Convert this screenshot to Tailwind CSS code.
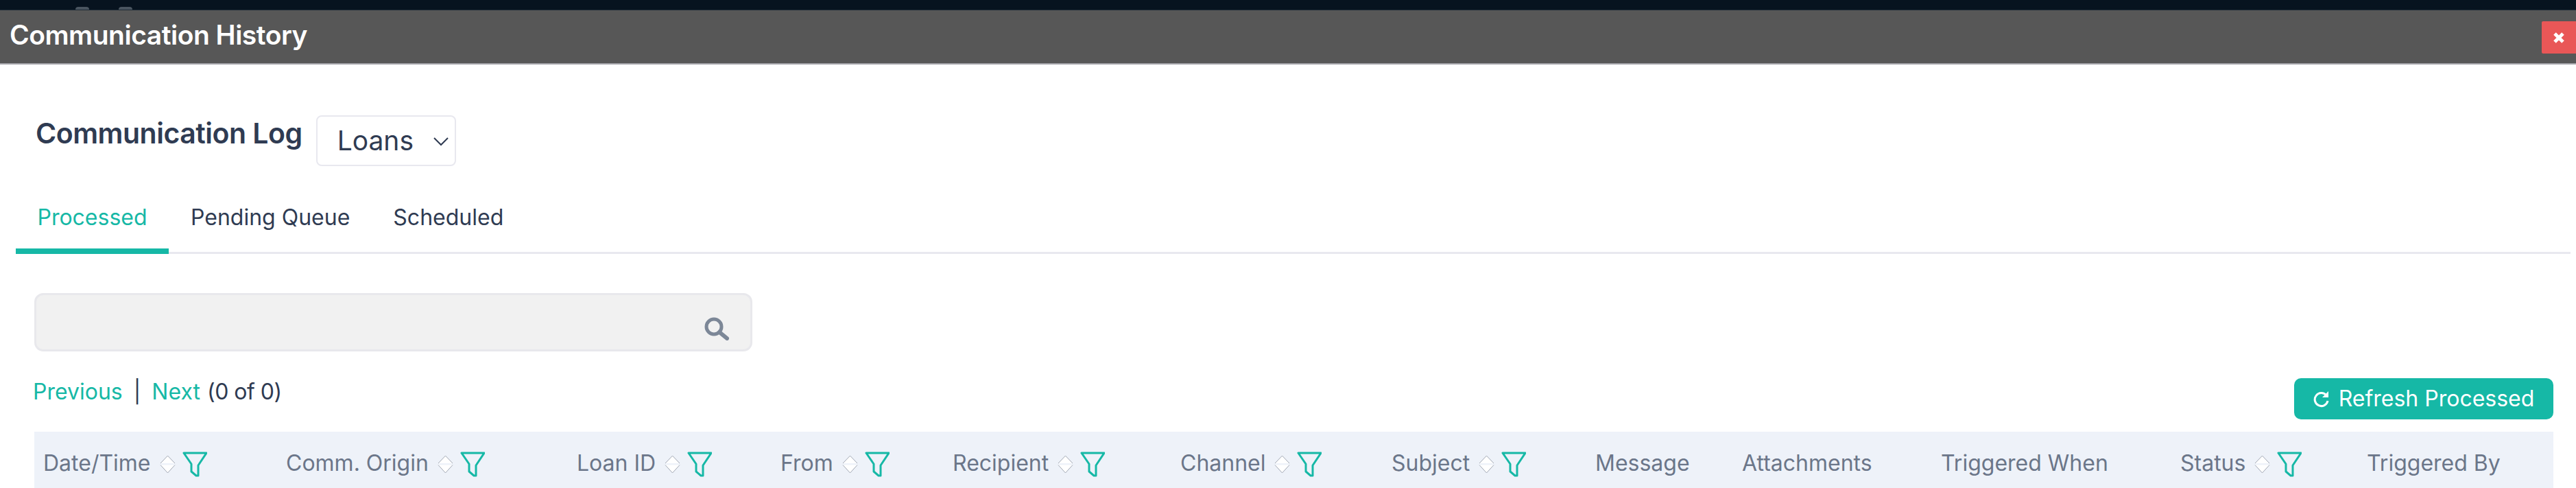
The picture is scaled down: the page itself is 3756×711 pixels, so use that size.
<!DOCTYPE html>
<html lang="en">
<head>
  <meta charset="UTF-8">
  <title>Communication History</title>
  <script src="https://cdn.jsdelivr.net/npm/@tailwindcss/browser@4"></script>
</head>
<body class="bg-white h-[711px] overflow-hidden font-[Inter,sans-serif] text-[#2f3b52]">
  <div class="h-[15px] bg-[#07131f] border-b border-[#1d2a36] flex items-end pl-[110px] gap-[43px]">
    <span class="w-[20px] h-[4px] rounded-t-full bg-[#4a5560]"></span>
    <span class="w-[20px] h-[4px] rounded-t-full bg-[#4a5560]"></span>
  </div>

  <!-- modal header -->
  <div class="h-[79px] bg-[#575757] border-b-2 border-[#a3a3a8] flex items-center justify-between pl-[14px]">
    <h1 class="text-[39px] leading-[44px] -mt-[5px] font-semibold text-white tracking-[-0.5px]">Communication History</h1>
    <button class="w-[50px] h-[47px] mt-[2px] bg-[#e95757] flex items-center justify-center rounded-l-[2px]">
      <svg width="18" height="18" viewBox="0 0 18 18"><path d="M3 3L15 15M15 3L3 15" stroke="#fff" stroke-width="5"/></svg>
    </button>
  </div>

  <div class="pl-[23px] pr-[8px]">
    <div class="flex items-start pl-[29px] pt-[74px] gap-[20px]">
      <h2 class="text-[41px] leading-[48px] mt-[2px] font-semibold text-[#2f3b52] tracking-[-0.5px]">Communication Log</h2>
      <div class="relative w-[204px] h-[74px]">
        <select class="appearance-none w-full h-full border-2 border-[#e8e8ef] rounded-[8px] bg-white pl-[29px] text-[39px] text-[#2f3b52]">
          <option>Loans</option>
        </select>
        <svg class="absolute right-[10px] top-[31px]" width="24" height="14" viewBox="0 0 24 14" fill="none"><path d="M2 2L12 12L22 2" stroke="#2f3b52" stroke-width="2"/></svg>
      </div>
    </div>

    <div class="flex border-b-[3px] border-[#e8e8ef] mt-[48px] h-[80px] text-[32px] leading-[40px]">
      <div class="w-[223px] h-[80px] border-b-[8px] border-[#16b8a6] text-[#16b8a6] text-center pt-[7px]">Processed</div>
      <div class="ml-[32px] pt-[7px]">Pending Queue</div>
      <div class="ml-[63px] pt-[7px]">Scheduled</div>
    </div>

    <!-- search -->
    <div class="relative ml-[27px] w-[1047px] h-[85px] mt-[57px]">
      <input class="w-full h-full bg-[#f1f1f1] border-[3px] border-[#e8e8ec] rounded-[13px]">
      <svg class="absolute left-[977px] top-[35px]" width="36" height="34" viewBox="0 0 36 34" fill="none">
        <circle cx="14" cy="14" r="11" stroke="#7c8797" stroke-width="5"/>
        <path d="M22 22L33 31" stroke="#7c8797" stroke-width="6" stroke-linecap="round"/>
      </svg>
    </div>

    <div class="ml-[27px] mr-[25px]">
      <div class="flex justify-between items-start mt-[39px]">
        <div class="text-[32px] leading-[44px] flex -mt-[2px] -ml-[2px]">
          <a class="text-[#16b8a6]">Previous</a>
          <span class="ml-[16px]">|</span>
          <a class="ml-[16px] text-[#16b8a6]">Next</a>
          <span class="ml-[10px] tracking-[-0.5px]">(0 of 0)</span>
        </div>
        <button class="w-[378px] h-[60px] bg-[#16b8a6] rounded-[10px] text-white text-[32px] flex items-center justify-center gap-[13px]">
          <svg width="24" height="26" viewBox="0 0 24 26" fill="none">
            <path d="M19 8A9.5 9.5 0 1 0 21 16" stroke="#fff" stroke-width="3"/>
            <path d="M22 2V11H13Z" fill="#fff"/>
          </svg>
          Refresh Processed
        </button>
      </div>

      <!-- table head -->
      <div class="grid grid-cols-[354px_424px_297px_251px_332px_308px_297px_214px_290px_349px_272px_285px] h-[90px] mt-[18px] bg-[#eef2f9] text-[32px] leading-[40px] text-[#6b7689]">
        <div class="flex items-start pl-[13px] pt-[26px]">Date/Time
          <svg class="ml-[13px] mt-[8px]" width="23" height="27" viewBox="0 0 23 27"><path d="M11.5 1L22 12H1ZM1 14.5H22L11.5 26Z" fill="#fff"/><path d="M1 12L11.5 1L22 12M1 14.5L11.5 26L22 14.5" fill="none" stroke="#a3a9b5"/></svg>
          <svg class="ml-[10px] mt-[3px]" width="36" height="37" viewBox="0 0 36 37" fill="none"><path d="M2 2H35L23 20V35H20L13 29V18Z" stroke="#16b8a6" stroke-width="3" stroke-linejoin="round"/></svg>
        </div>
        <div class="flex items-start pl-[13px] pt-[26px]">Comm. Origin
          <svg class="ml-[13px] mt-[8px]" width="23" height="27" viewBox="0 0 23 27"><path d="M11.5 1L22 12H1ZM1 14.5H22L11.5 26Z" fill="#fff"/><path d="M1 12L11.5 1L22 12M1 14.5L11.5 26L22 14.5" fill="none" stroke="#a3a9b5"/></svg>
          <svg class="ml-[10px] mt-[3px]" width="36" height="37" viewBox="0 0 36 37" fill="none"><path d="M2 2H35L23 20V35H20L13 29V18Z" stroke="#16b8a6" stroke-width="3" stroke-linejoin="round"/></svg>
        </div>
        <div class="flex items-start pl-[13px] pt-[26px]">Loan ID
          <svg class="ml-[13px] mt-[8px]" width="23" height="27" viewBox="0 0 23 27"><path d="M11.5 1L22 12H1ZM1 14.5H22L11.5 26Z" fill="#fff"/><path d="M1 12L11.5 1L22 12M1 14.5L11.5 26L22 14.5" fill="none" stroke="#a3a9b5"/></svg>
          <svg class="ml-[10px] mt-[3px]" width="36" height="37" viewBox="0 0 36 37" fill="none"><path d="M2 2H35L23 20V35H20L13 29V18Z" stroke="#16b8a6" stroke-width="3" stroke-linejoin="round"/></svg>
        </div>
        <div class="flex items-start pl-[13px] pt-[26px]">From
          <svg class="ml-[13px] mt-[8px]" width="23" height="27" viewBox="0 0 23 27"><path d="M11.5 1L22 12H1ZM1 14.5H22L11.5 26Z" fill="#fff"/><path d="M1 12L11.5 1L22 12M1 14.5L11.5 26L22 14.5" fill="none" stroke="#a3a9b5"/></svg>
          <svg class="ml-[10px] mt-[3px]" width="36" height="37" viewBox="0 0 36 37" fill="none"><path d="M2 2H35L23 20V35H20L13 29V18Z" stroke="#16b8a6" stroke-width="3" stroke-linejoin="round"/></svg>
        </div>
        <div class="flex items-start pl-[13px] pt-[26px]">Recipient
          <svg class="ml-[13px] mt-[8px]" width="23" height="27" viewBox="0 0 23 27"><path d="M11.5 1L22 12H1ZM1 14.5H22L11.5 26Z" fill="#fff"/><path d="M1 12L11.5 1L22 12M1 14.5L11.5 26L22 14.5" fill="none" stroke="#a3a9b5"/></svg>
          <svg class="ml-[10px] mt-[3px]" width="36" height="37" viewBox="0 0 36 37" fill="none"><path d="M2 2H35L23 20V35H20L13 29V18Z" stroke="#16b8a6" stroke-width="3" stroke-linejoin="round"/></svg>
        </div>
        <div class="flex items-start pl-[13px] pt-[26px]">Channel
          <svg class="ml-[13px] mt-[8px]" width="23" height="27" viewBox="0 0 23 27"><path d="M11.5 1L22 12H1ZM1 14.5H22L11.5 26Z" fill="#fff"/><path d="M1 12L11.5 1L22 12M1 14.5L11.5 26L22 14.5" fill="none" stroke="#a3a9b5"/></svg>
          <svg class="ml-[10px] mt-[3px]" width="36" height="37" viewBox="0 0 36 37" fill="none"><path d="M2 2H35L23 20V35H20L13 29V18Z" stroke="#16b8a6" stroke-width="3" stroke-linejoin="round"/></svg>
        </div>
        <div class="flex items-start pl-[13px] pt-[26px]">Subject
          <svg class="ml-[13px] mt-[8px]" width="23" height="27" viewBox="0 0 23 27"><path d="M11.5 1L22 12H1ZM1 14.5H22L11.5 26Z" fill="#fff"/><path d="M1 12L11.5 1L22 12M1 14.5L11.5 26L22 14.5" fill="none" stroke="#a3a9b5"/></svg>
          <svg class="ml-[10px] mt-[3px]" width="36" height="37" viewBox="0 0 36 37" fill="none"><path d="M2 2H35L23 20V35H20L13 29V18Z" stroke="#16b8a6" stroke-width="3" stroke-linejoin="round"/></svg>
        </div>
        <div class="pl-[13px] pt-[26px]">Message</div>
        <div class="pl-[13px] pt-[26px]">Attachments</div>
        <div class="pl-[13px] pt-[26px]">Triggered When</div>
        <div class="flex items-start pl-[13px] pt-[26px]">Status
          <svg class="ml-[13px] mt-[8px]" width="23" height="27" viewBox="0 0 23 27"><path d="M11.5 1L22 12H1ZM1 14.5H22L11.5 26Z" fill="#fff"/><path d="M1 12L11.5 1L22 12M1 14.5L11.5 26L22 14.5" fill="none" stroke="#a3a9b5"/></svg>
          <svg class="ml-[10px] mt-[3px]" width="36" height="37" viewBox="0 0 36 37" fill="none"><path d="M2 2H35L23 20V35H20L13 29V18Z" stroke="#16b8a6" stroke-width="3" stroke-linejoin="round"/></svg>
        </div>
        <div class="pl-[13px] pt-[26px]">Triggered By</div>
      </div>
    </div>
  </div>
</body>
</html>
